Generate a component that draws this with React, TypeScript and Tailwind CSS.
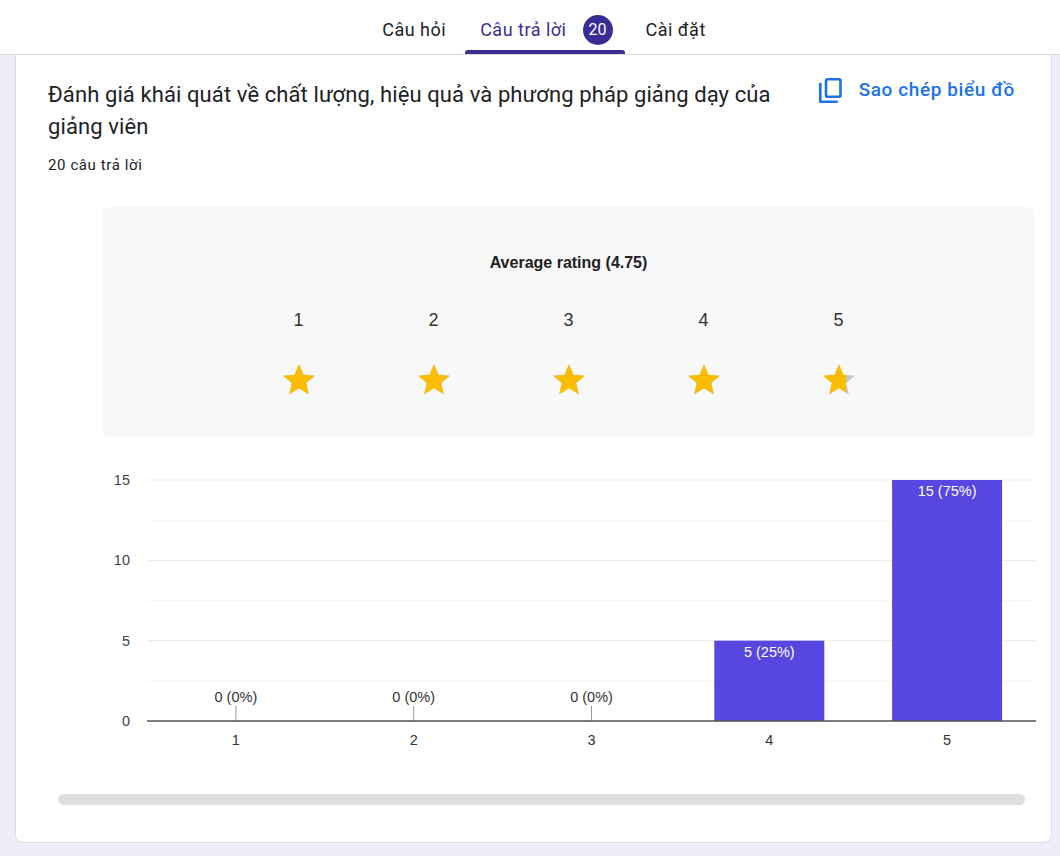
import React from 'react';

const STAR = 'M12 17.27L18.18 21l-1.64-7.03L22 9.24l-7.19-.61L12 2 9.19 8.63 2 9.24l5.46 4.73L5.82 21z';

function Star({ fill, id }: { fill: number; id: string }) {
  return (
    <svg width="38" height="38" viewBox="0 0 24 24">
      <defs>
        <clipPath id={id}>
          <rect x="0" y="0" width={2 + 20 * fill} height="24" />
        </clipPath>
      </defs>
      <path d={STAR} fill="#c6c6c6" />
      <path d={STAR} fill="#fbbc04" clipPath={`url(#${id})`} />
    </svg>
  );
}

function CopyIcon() {
  return (
    <svg width="26" height="28" viewBox="0 0 26 28" fill="none" stroke="#1a73e8" strokeWidth="2.6">
      <path d="M2.3 6v18.7h17.5" strokeLinejoin="round" />
      <rect x="8" y="2.3" width="14.5" height="17.5" rx="1.5" />
    </svg>
  );
}

const bars = [
  { label: '1', value: 0 },
  { label: '2', value: 0 },
  { label: '3', value: 0 },
  { label: '4', value: 5 },
  { label: '5', value: 15 },
];

function BarChart() {
  const left = 146;
  const right = 1035;
  const top = 480;
  const base = 721;
  const step = (right - left) / 5;
  const yOf = (v: number) => base - (v / 15) * (base - top);
  return (
    <svg width="983" height="320" viewBox="57 460 983 320" className="block" style={{ fontFamily: '"Liberation Sans", Arial, sans-serif' }}>
      {[0, 2.5, 5, 7.5, 10, 12.5, 15].map((v) => (
        <line key={v} x1={left} x2={right} y1={yOf(v)} y2={yOf(v)} stroke={v % 5 === 0 ? '#ebebeb' : '#f5f5f5'} strokeWidth="1" />
      ))}
      {[0, 5, 10, 15].map((v) => (
        <text key={v} x={129} y={yOf(v) + 5} textAnchor="end" fontSize="14.5" fill="#444">
          {v}
        </text>
      ))}
      {bars.map((b, i) => {
        const cx = left + step * (i + 0.5);
        const w = 110;
        const pct = `${b.value} (${(b.value / 20) * 100}%)`;
        return (
          <g key={b.label}>
            {b.value > 0 ? (
              <>
                <rect x={cx - w / 2} y={yOf(b.value)} width={w} height={base - yOf(b.value)} fill="#5746e0" />
                <text x={cx} y={yOf(b.value) + 16} textAnchor="middle" fontSize="14.5" fill="#fff">
                  {pct}
                </text>
              </>
            ) : (
              <>
                <line x1={cx} x2={cx} y1={706} y2={base} stroke="#999" strokeWidth="1" />
                <text x={cx} y={702} textAnchor="middle" fontSize="14.5" fill="#333">
                  {pct}
                </text>
              </>
            )}
            <text x={cx} y={745} textAnchor="middle" fontSize="14.5" fill="#333">
              {b.label}
            </text>
          </g>
        );
      })}
      <line x1={left} x2={right} y1={base} y2={base} stroke="#555" strokeWidth="1.5" />
    </svg>
  );
}

export default function App() {
  return (
    <div className="min-h-[856px] bg-[#efedfa] font-['Roboto','Noto_Sans',sans-serif] text-[#202124]">
      {/* Tabs */}
      <header className="h-[55px] bg-white border-b border-[#dadce0] flex justify-center pl-[28px]">
        <div className="flex h-full text-[18px] tracking-[0.5px]">
          <div className="pr-[19px] pt-[5px] flex items-center text-[#202124]">Câu hỏi</div>
          <div className="relative pl-[15px] pr-[12px] pt-[5px] flex items-center gap-[16px] text-[#3b2e93]">
            <span>Câu trả lời</span>
            <span className="w-[30px] h-[30px] rounded-full bg-[#3a2c95] text-white text-[16px] tracking-normal flex items-center justify-center">20</span>
            <div className="absolute left-0 right-0 bottom-0 h-[4px] rounded-t-[3px] bg-[#3b2e93]" />
          </div>
          <div className="pl-[21px] pt-[5px] flex items-center text-[#202124]">Cài đặt</div>
        </div>
      </header>

      {/* Card */}
      <div className="ml-[15px] mr-[8px] bg-white border border-t-0 border-[#dadce0] rounded-b-[8px] pt-[24px] pb-[37px]">
        <div className="flex pl-[32px] pr-[36px]">
          <div className="flex-1">
            <h2 className="text-[22px] leading-[32px] tracking-[0.1px] w-[745px]">
              Đánh giá khái quát về chất lượng, hiệu quả và phương pháp giảng dạy của giảng viên
            </h2>
            <div className="mt-[12px] text-[15px] leading-[20px] tracking-[0.6px] text-[#202124]">20 câu trả lời</div>
          </div>
          <div className="flex items-start gap-[15px] -mt-[2px]">
            <CopyIcon />
            <span className="text-[19px] font-medium tracking-[0.6px] text-[#1a73e8] leading-[26px]">Sao chép biểu đồ</span>
          </div>
        </div>

        {/* Rating box */}
        <div className="ml-[86px] mr-[16px] mt-[32px] h-[230px] rounded-[6px] bg-[#f8f8f8] flex flex-col items-center font-['Liberation_Sans',Arial,sans-serif]">
          <div className="mt-[44px] text-[16px] font-bold text-[#202124]">Average rating (4.75)</div>
          <div className="mt-[34px] flex gap-[97px]">
            {[1, 2, 3, 4, 5].map((n) => (
              <div key={n} className="w-[38px] flex flex-col items-center">
                <span className="text-[18px] leading-[22px] text-[#333]">{n}</span>
                <div className="mt-[30px]">
                  <Star id={`s${n}`} fill={n === 5 ? 0.72 : 1} />
                </div>
              </div>
            ))}
          </div>
        </div>

        {/* Bar chart */}
        <div className="ml-[42px] mt-[23px]">
          <BarChart />
        </div>

        {/* Scrollbar */}
        <div className="ml-[42px] mr-[26px] mt-[14px] h-[11px] rounded-full bg-[#dedede]" />
      </div>
    </div>
  );
}
